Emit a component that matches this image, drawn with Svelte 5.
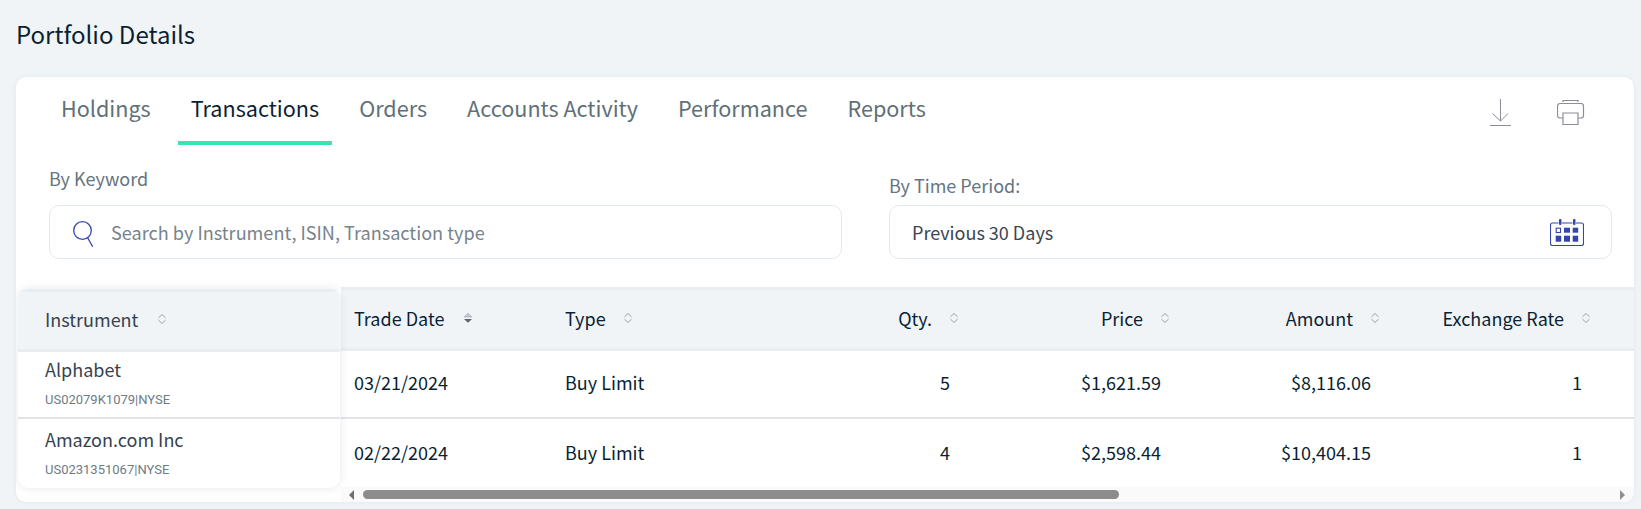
<script>
	const tabs = ['Holdings', 'Transactions', 'Orders', 'Accounts Activity', 'Performance', 'Reports'];
	const active = 'Transactions';

	const rows = [
		{ name: 'Alphabet', sub: 'US02079K1079|NYSE', date: '03/21/2024', type: 'Buy Limit', qty: '5', price: '$1,621.59', amount: '$8,116.06', rate: '1' },
		{ name: 'Amazon.com Inc', sub: 'US0231351067|NYSE', date: '02/22/2024', type: 'Buy Limit', qty: '4', price: '$2,598.44', amount: '$10,404.15', rate: '1' }
	];

	const columns = [
		{ key: 'date', label: 'Trade Date', sorted: true },
		{ key: 'type', label: 'Type' },
		{ key: 'qty', label: 'Qty.', right: true },
		{ key: 'price', label: 'Price', right: true },
		{ key: 'amount', label: 'Amount', right: true },
		{ key: 'rate', label: 'Exchange Rate', right: true }
	];
</script>

{#snippet sortIcon(sorted)}
	<svg class="sort" class:sorted viewBox="0 0 10 12" width="10" height="12">
		{#if sorted}
			<path d="M1 5 5 1.200 9 5Z" fill="#c4c8ce" stroke="#a4a8b0" stroke-width="0.600" />
			<path d="M1 7H9L5 10.800Z" fill="#5c6470" />
		{:else}
			<path d="M1.500 4.800 5 1.500l3.500 3.300M1.500 7.200 5 10.500l3.500-3.300" fill="none" stroke="#9aa0a8" stroke-width="1" />
		{/if}
	</svg>
{/snippet}

<div class="page">
	<h1>Portfolio Details</h1>

	<div class="card">
		<div class="tabbar">
			<nav class="tabs">
				{#each tabs as tab}
					<span class="tab" class:active={tab === active}>{tab}</span>
				{/each}
			</nav>
			<div class="tools">
				<svg width="24" height="28" viewBox="0 0 24 28" fill="none" stroke="#8b8d9c" stroke-width="1">
					<path d="M11.500 0v22M3.500 14.500 11.500 22l7.500-7.500M1 26.500h21" />
				</svg>
				<svg width="28" height="27" viewBox="0 0 28 27" fill="none" stroke="#8b8d9c" stroke-width="1.200">
					<path d="M6 3V1.500h15V3" />
					<path d="M6 19H3a2.500 2.500 0 0 1-2.500-2.500V7A2.500 2.500 0 0 1 3 4.500h21A2.500 2.500 0 0 1 26.500 7v9.500A2.500 2.500 0 0 1 24 19h-3" />
					<path d="M6 14h15v11.500H6z" />
				</svg>
			</div>
		</div>

		<div class="filters">
			<div class="field keyword">
				<span class="label">By Keyword</span>
				<div class="box">
					<svg class="search" width="24" height="27" viewBox="0 0 24 27" fill="none" stroke="#3446ad" stroke-width="1.300">
						<circle cx="10.500" cy="10.500" r="8.800" />
						<path d="m15.500 17.500 5.200 9.200" />
					</svg>
					<span class="placeholder">Search by Instrument, ISIN, Transaction type</span>
				</div>
			</div>
			<div class="field period">
				<span class="label">By Time Period:</span>
				<div class="box between">
					<span class="value">Previous 30 Days</span>
					<svg width="34" height="27" viewBox="0 0 34 27">
						<path d="M8.500 4H2.500a2 2 0 0 0-2 2v18.500a2 2 0 0 0 2 2h29a2 2 0 0 0 2-2V6a2 2 0 0 0-2-2h-5.500M12 4h10.500" fill="none" stroke="#3446ad" stroke-width="1.100" />
						<rect x="9" y="0" width="2.500" height="6" rx="1" fill="#3446ad" />
						<rect x="23" y="0" width="2.500" height="6" rx="1" fill="#3446ad" />
						<rect x="6.200" y="9.200" width="4.300" height="4.300" fill="#fff" stroke="#3446ad" stroke-width="1.100" />
						<rect x="14" y="8.700" width="6" height="5" fill="#3446ad" />
						<rect x="22.700" y="8.700" width="5.500" height="5" fill="#3446ad" />
						<rect x="5.700" y="16.700" width="5.500" height="6" fill="#3446ad" />
						<rect x="14" y="16.700" width="6" height="6" fill="#3446ad" />
						<rect x="22.700" y="16.700" width="5.500" height="6" fill="#3446ad" />
					</svg>
				</div>
			</div>
		</div>

		<div class="table-wrap">
			<div class="fixed">
				<div class="fixed-head">
					<span>Instrument</span>
					{@render sortIcon(false)}
				</div>
				{#each rows as row}
					<div class="fixed-row">
						<span class="name">{row.name}</span>
						<span class="sub">{row.sub}</span>
					</div>
				{/each}
			</div>

			<div class="scroll">
				<div class="grid head">
					{#each columns as col}
						<div class="th" class:right={col.right}>
							<span>{col.label}</span>
							{@render sortIcon(col.sorted)}
						</div>
					{/each}
				</div>
				{#each rows as row, i}
					<div class="grid body" class:last={i === rows.length - 1}>
						{#each columns as col}
							<div class="td" class:right={col.right}>{row[col.key]}</div>
						{/each}
					</div>
				{/each}
				<div class="scrollbar">
					<span class="arrow left"></span>
					<div class="track"><div class="thumb"></div></div>
					<span class="arrow rightward"></span>
				</div>
			</div>
		</div>
	</div>
</div>

<style>
	:global(body) {
		margin: 0;
		background: #f0f4f7;
	}

	.page {
		height: 509px;
		padding: 0 7px 0 16px;
		box-sizing: border-box;
		font-family: "Noto Sans CJK SC", "Noto Sans", sans-serif;
		color: #0b1f33;
		overflow: hidden;
	}

	h1 {
		margin: 0;
		height: 77px;
		padding-top: 16px;
		box-sizing: border-box;
		font-size: 24px;
		line-height: 35px;
		font-weight: 400;
	}

	.card {
		height: 425px;
		background: #fff;
		border-radius: 10px;
		box-shadow: 0 0 4px rgba(40, 60, 90, 0.08);
		overflow: hidden;
	}

	.tabbar {
		display: flex;
		justify-content: space-between;
		height: 67px;
		padding: 0 49px 0 32.5px;
	}

	.tabs {
		display: flex;
		gap: 15px;
	}

	.tab {
		padding: 14px 12.5px 0;
		height: 50px;
		font-size: 21.6px;
		line-height: 34px;
		color: #5f7078;
		border-bottom: 4px solid transparent;
	}

	.tab.active {
		color: #0b1f33;
		border-bottom-color: #36e5b0;
	}

	.tools {
		display: flex;
		gap: 44px;
		padding-top: 22px;
	}

	.filters {
		display: flex;
		height: 143px;
		padding: 0 22px 0 33px;
		box-sizing: border-box;
		justify-content: space-between;
	}

	.field {
		display: flex;
		flex-direction: column;
		justify-content: flex-end;
		height: 115px;
	}

	.keyword {
		width: 793px;
	}

	.period {
		width: 723px;
	}

	.label {
		font-size: 18px;
		line-height: 26px;
		color: #66757f;
	}

	.keyword .label {
		margin-bottom: 14px;
	}

	.period .label {
		margin-bottom: 7px;
	}

	.box {
		display: flex;
		align-items: center;
		height: 54px;
		box-sizing: border-box;
		border: 1px solid #e2e8f0;
		border-radius: 10px;
		padding: 0 27px 0 22px;
	}

	.between {
		justify-content: space-between;
	}

	.search {
		margin: 2px 15px 0 0;
	}

	.placeholder {
		font-size: 18.1px;
		color: #77838c;
	}

	.value {
		font-size: 18px;
		color: #3b4650;
	}

	.table-wrap {
		display: flex;
		position: relative;
	}

	.fixed {
		width: 322px;
		height: 199px;
		margin: 2px 1px 0 2px;
		flex: none;
		background: #fff;
		border-radius: 10px;
		box-shadow: 0 0 8px rgba(40, 60, 90, 0.12);
		position: relative;
		z-index: 1;
		overflow: hidden;
	}

	.fixed-head {
		height: 54px;
		padding: 0 0 3px 27px;
		display: flex;
		align-items: center;
		gap: 19px;
		background: #f0f4f7;
		border-top: 3px solid #e8edf2;
		border-bottom: 3px solid #e8edf2;
		font-size: 18px;
		color: #36434f;
	}

	.fixed-row {
		height: 67px;
		padding: 4px 0 0 27px;
		box-sizing: border-box;
		border-bottom: 2px solid #e2e4e6;
		display: flex;
		flex-direction: column;
	}

	.fixed-row:last-child {
		padding-top: 7px;
		border-bottom: 0;
	}

	.name {
		font-size: 18px;
		line-height: 26px;
		color: #36434f;
	}

	.sub {
		font-family: Roboto, sans-serif;
		font-size: 13px;
		line-height: 18px;
		margin-top: 9px;
		color: #6f7b85;
	}

	.scroll {
		flex: 1;
		min-width: 0;
	}

	.grid {
		display: grid;
		grid-template-columns: 211px 200px 210px 211px 210px 211px 1fr;
	}

	.head {
		height: 64px;
		box-sizing: border-box;
		background: #f0f4f7;
		border-top: 3px solid #e8edf2;
		border-bottom: 3px solid #e8edf2;
		padding-bottom: 2px;
	}

	.th {
		display: flex;
		align-items: center;
		gap: 17px;
		padding-left: 13px;
		font-size: 18px;
		color: #0b1f33;
	}

	.th.right {
		justify-content: flex-end;
		padding: 0 3px 0 0;
	}

	.sort.sorted {
		margin-left: 2px;
	}

	.body {
		height: 68px;
		box-sizing: border-box;
		border-bottom: 2px solid #e2e4e6;
		padding-bottom: 4px;
	}

	.body.last {
		height: 68px;
		border-bottom: 0;
		padding-bottom: 3px;
	}

	.td {
		display: flex;
		align-items: center;
		padding-left: 13px;
		font-size: 18px;
		color: #0b1f33;
	}

	.td.right {
		justify-content: flex-end;
		padding: 0 12px 0 0;
	}

	.scrollbar {
		height: 15px;
		background: #fafafa;
		display: flex;
		align-items: center;
		padding: 0 9px 1px 8px;
		gap: 5px;
	}

	.track {
		flex: 1;
		height: 9px;
	}

	.thumb {
		width: 756px;
		height: 9px;
		margin-left: 4px;
		border-radius: 5px;
		background: #8c8c8c;
	}

	.arrow {
		width: 0;
		height: 0;
		border-top: 5px solid transparent;
		border-bottom: 5px solid transparent;
	}

	.arrow.left {
		border-right: 5px solid #6e6e6e;
	}

	.arrow.rightward {
		border-left: 5px solid #8f8f8f;
	}
</style>
